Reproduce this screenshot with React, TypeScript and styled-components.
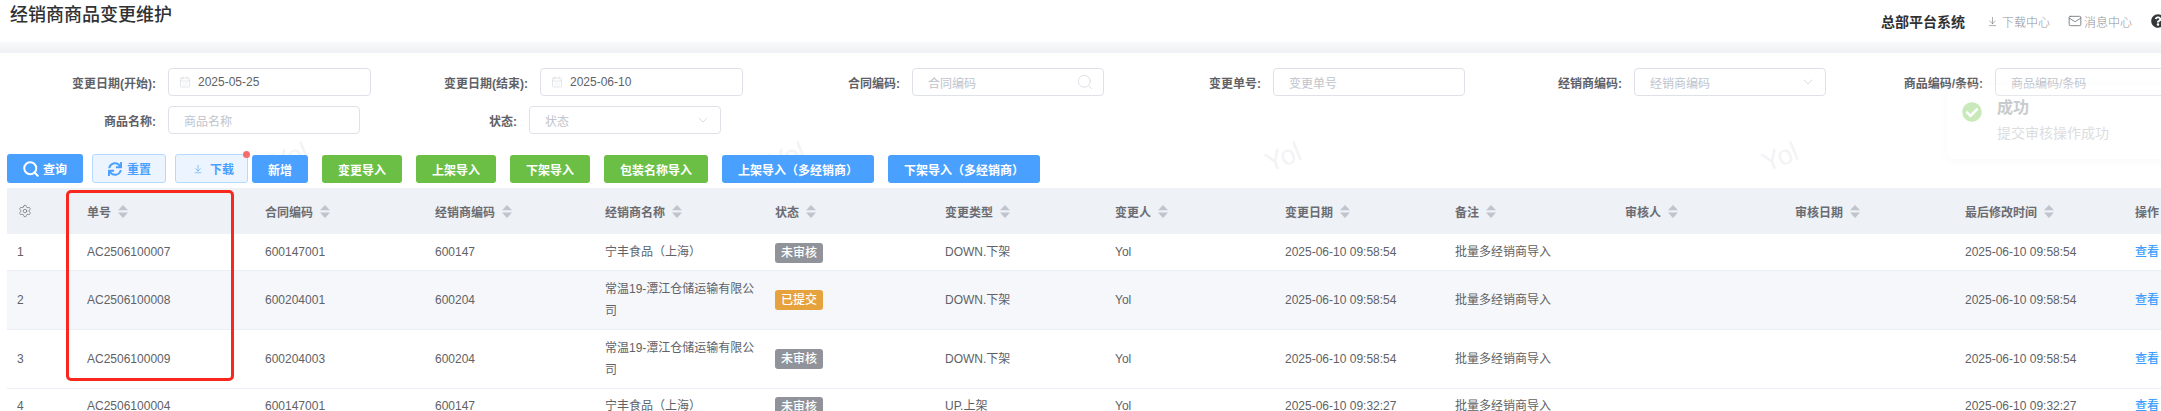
import React from "react";
import styled, { createGlobalStyle } from "styled-components";
import { Search, ArrowDownToLine, Mail, CalendarDays, ChevronDown, Settings } from "lucide-react";
import { FaSync, FaQuestionCircle, FaCheckCircle } from "react-icons/fa";

const Global = createGlobalStyle`
  html, body { margin: 0; padding: 0; background: #fff; }
  body { width: 2161px; height: 411px; overflow: hidden; font-family: "Liberation Sans", "Noto Sans CJK SC", sans-serif; font-size: 12px; color: #606266; }
  * { box-sizing: border-box; }
`;

const Page = styled.div`
  position: relative;
  width: 2161px;
  height: 411px;
  overflow: hidden;
`;

const TopBar = styled.header`
  display: flex;
  align-items: flex-start;
  justify-content: space-between;
  height: 42px;
  padding-left: 10px;
`;

const Title = styled.h1`
  margin: 4px 0 0;
  font-size: 18px;
  line-height: 22px;
  font-weight: 500;
  color: #303133;
`;

const TopRight = styled.div`
  display: flex;
  align-items: center;
  height: 42px;
  margin-right: -4px;
`;

const SystemName = styled.span`
  font-size: 14px;
  font-weight: 600;
  color: #303133;
  margin-right: 22px;
`;

const TopLink = styled.span<{ $gap: number }>`
  display: flex;
  align-items: center;
  gap: ${(p) => p.$gap}px;
  margin-right: 18px;
  font-size: 12px;
  font-weight: 300;
  color: #8f9298;
  svg { color: #6a6d73; flex-shrink: 0; }
`;

const HelpIcon = styled(FaQuestionCircle)`
  color: #33363b;
  width: 14px;
  height: 14px;
  margin-left: 1px;
`;

const Band = styled.div`
  height: 11px;
  background: linear-gradient(180deg, #f8f9fa 0%, #eff1f4 100%);
`;

const Form = styled.section`
  display: flex;
  flex-direction: column;
  gap: 10px;
  padding: 15px 0 0 7px;
`;

const FormRow = styled.div`
  display: flex;
  gap: 8px;
  white-space: nowrap;
`;

const Field = styled.div`
  display: flex;
  align-items: center;
  gap: 12px;
  flex-shrink: 0;
`;

const Label = styled.label`
  width: 149px;
  text-align: right;
  font-size: 12px;
  font-weight: 600;
  color: #5f6166;
`;

const InputBox = styled.div<{ $date?: boolean }>`
  display: flex;
  align-items: center;
  justify-content: space-between;
  width: ${(p) => (p.$date ? 203 : 192)}px;
  height: 28px;
  padding: 0 9px 0 ${(p) => (p.$date ? 10 : 15)}px;
  border: 1px solid #dfe1e8;
  border-radius: 4px;
  background: #fff;
  font-size: 12px;
`;

const Placeholder = styled.span`
  color: #c0c4cc;
`;

const DateValue = styled.span`
  display: flex;
  align-items: center;
  gap: 7px;
  color: #606266;
  svg { color: #c8ccd4; }
`;

const Marks = styled.div`
  position: absolute;
  top: 142px;
  left: 272px;
  display: flex;
  gap: 460px;
  pointer-events: none;
`;

const Mark = styled.span`
  font-size: 27px;
  line-height: 31px;
  color: #f3f3f5;
  transform: rotate(-22deg);
`;

const Toolbar = styled.div`
  position: relative;
  z-index: 1;
  display: flex;
  align-items: flex-end;
  gap: 14px;
  margin-top: 20px;
  padding-left: 7px;
  height: 29px;
`;

const LeadGroup = styled.div`
  display: flex;
  gap: 9px;
  margin-right: -10px;
`;

const Btn = styled.button<{ $tone: "blue" | "green" }>`
  height: 28px;
  padding: 0 16px;
  border: none;
  border-radius: 3px;
  font-family: inherit;
  font-size: 12px;
  font-weight: 600;
  color: #fff;
  white-space: nowrap;
  background: ${(p) => (p.$tone === "blue" ? "#49a0ff" : "#6bbf45")};
`;

const QueryBtn = styled.button`
  display: flex;
  align-items: center;
  gap: 3px;
  width: 76px;
  height: 29px;
  padding: 0 0 0 15px;
  border: none;
  border-radius: 3px;
  background: #49a0ff;
  color: #fff;
  font-family: inherit;
  font-size: 12px;
  font-weight: 600;
`;

const PlainBtn = styled.button<{ $w: number; $pad: number; $gap: number }>`
  position: relative;
  display: flex;
  align-items: center;
  gap: ${(p) => p.$gap}px;
  width: ${(p) => p.$w}px;
  height: 29px;
  padding: 0 0 0 ${(p) => p.$pad}px;
  border: 1px solid #b5d9ff;
  border-radius: 3px;
  background: #ecf5ff;
  color: #49a0ff;
  font-family: inherit;
  font-size: 12px;
  font-weight: 600;
`;

const Dot = styled.span`
  position: absolute;
  top: -4px;
  right: -3px;
  width: 7px;
  height: 7px;
  border-radius: 50%;
  background: #f56c6c;
`;

const TableWrap = styled.div`
  position: relative;
  z-index: 1;
  margin: 5px 0 0 7px;
  width: 2268px;
`;

const Table = styled.table`
  table-layout: fixed;
  width: 2268px;
  border-collapse: collapse;
  font-size: 12px;
`;

const Th = styled.th`
  height: 46px;
  padding: 0 10px;
  background: #eef1f6;
  text-align: left;
  font-weight: 600;
  color: #6a6c72;
`;

const ThInner = styled.span`
  display: inline-flex;
  align-items: center;
  gap: 7px;
`;

const Tr = styled.tr<{ $stripe?: boolean; $h: number }>`
  height: ${(p) => p.$h}px;
  background: ${(p) => (p.$stripe ? "#f5f7fb" : "#fff")};
  border-bottom: 1px solid #ebeef5;
`;

const Td = styled.td`
  padding: 0 10px;
  line-height: 22px;
  color: #606266;
  word-break: break-all;
`;

const Tag = styled.span<{ $tone: "gray" | "orange" }>`
  display: inline-block;
  height: 20px;
  padding: 0 6px;
  line-height: 20px;
  border-radius: 3px;
  color: #fff;
  font-weight: 500;
  vertical-align: middle;
  background: ${(p) => (p.$tone === "gray" ? "#909399" : "#e6a23c")};
`;

const LinkText = styled.a`
  color: #409eff;
  font-weight: 500;
`;

const RedBox = styled.div`
  position: absolute;
  left: 59px;
  top: 2px;
  width: 168px;
  height: 191px;
  border: 3px solid #f8281e;
  border-radius: 5px;
  pointer-events: none;
`;

const Toast = styled.div`
  position: absolute;
  z-index: 3;
  top: 85px;
  left: 1947px;
  display: flex;
  gap: 15px;
  width: 330px;
  height: 74px;
  padding: 14px 26px 14px 15px;
  border-radius: 8px;
  background: rgba(255, 255, 255, 0.2);
  box-shadow: 0 2px 12px rgba(0, 0, 0, 0.03);
`;

const ToastIcon = styled(FaCheckCircle)`
  width: 20px;
  height: 20px;
  margin-top: 3px;
  color: #c9e9ba;
  flex-shrink: 0;
`;

const ToastBody = styled.div`
  display: flex;
  flex-direction: column;
  gap: 4px;
`;

const ToastTitle = styled.div`
  font-size: 16px;
  line-height: 18px;
  font-weight: 600;
  color: #c9cacc;
`;

const ToastText = styled.div`
  font-size: 14px;
  line-height: 24px;
  color: #dcdddf;
`;

const Sort = () => (
  <svg width="10" height="13" viewBox="0 0 10 13" fill="#c0c4cc">
    <path d="M5 0 10 5.2H0Z" />
    <path d="M0 7.6H10L5 13Z" />
  </svg>
);

const columns = ["合同编码", "经销商编码", "经销商名称", "状态", "变更类型", "变更人", "变更日期", "备注", "审核人", "审核日期", "最后修改时间"];
const widths = [70, 178, ...columns.map(() => 170), 150];

const rows = [
  { h: 36, no: "AC2506100007", contract: "600147001", dealer: "600147", name: "宁丰食品（上海）", tag: "未审核", type: "DOWN.下架", date: "2025-06-10 09:58:54" },
  { h: 59, no: "AC2506100008", contract: "600204001", dealer: "600204", name: "常温19-潭江仓储运输有限公司", tag: "已提交", type: "DOWN.下架", date: "2025-06-10 09:58:54" },
  { h: 59, no: "AC2506100009", contract: "600204003", dealer: "600204", name: "常温19-潭江仓储运输有限公司", tag: "未审核", type: "DOWN.下架", date: "2025-06-10 09:58:54" },
  { h: 36, no: "AC2506100004", contract: "600147001", dealer: "600147", name: "宁丰食品（上海）", tag: "未审核", type: "UP.上架", date: "2025-06-10 09:32:27" },
];

const DateField = ({ label, value }: { label: string; value: string }) => (
  <Field>
    <Label>{label}</Label>
    <InputBox $date>
      <DateValue>
        <CalendarDays size={12} strokeWidth={1} />
        {value}
      </DateValue>
    </InputBox>
  </Field>
);

const TextField = ({ label, hint, icon }: { label: string; hint: string; icon?: React.ReactNode }) => (
  <Field>
    <Label>{label}</Label>
    <InputBox>
      <Placeholder>{hint}</Placeholder>
      {icon}
    </InputBox>
  </Field>
);

const Chevron = () => <ChevronDown size={16} strokeWidth={0.9} color="#c0c4cc" />;

export default function App() {
  return (
    <Page>
      <Global />
      <TopBar>
        <Title>经销商商品变更维护</Title>
        <TopRight>
          <SystemName>总部平台系统</SystemName>
          <TopLink $gap={4}>
            <ArrowDownToLine size={11} strokeWidth={1.2} />
            下载中心
          </TopLink>
          <TopLink $gap={2}>
            <Mail size={14} strokeWidth={1.4} />
            消息中心
          </TopLink>
          <HelpIcon />
        </TopRight>
      </TopBar>
      <Band />
      <Form>
        <FormRow>
          <DateField label="变更日期(开始):" value="2025-05-25" />
          <DateField label="变更日期(结束):" value="2025-06-10" />
          <TextField label="合同编码:" hint="合同编码" icon={<Search size={18} strokeWidth={1} color="#d3d6de" />} />
          <TextField label="变更单号:" hint="变更单号" />
          <TextField label="经销商编码:" hint="经销商编码" icon={<Chevron />} />
          <TextField label="商品编码/条码:" hint="商品编码/条码" />
        </FormRow>
        <FormRow>
          <TextField label="商品名称:" hint="商品名称" />
          <TextField label="状态:" hint="状态" icon={<Chevron />} />
        </FormRow>
      </Form>
      <Marks>
        {[0, 1, 2, 3].map((i) => (
          <Mark key={i}>Yol</Mark>
        ))}
      </Marks>
      <Toolbar>
        <LeadGroup>
          <QueryBtn>
            <Search size={18} strokeWidth={2.6} />
            查询
          </QueryBtn>
          <PlainBtn $w={74} $pad={15} $gap={5}>
            <FaSync size={14} />
            重置
          </PlainBtn>
          <PlainBtn $w={73} $pad={17} $gap={7}>
            <ArrowDownToLine size={10} strokeWidth={1.4} />
            下载
            <Dot />
          </PlainBtn>
        </LeadGroup>
        <Btn $tone="blue">新增</Btn>
        <Btn $tone="green">变更导入</Btn>
        <Btn $tone="green">上架导入</Btn>
        <Btn $tone="green">下架导入</Btn>
        <Btn $tone="green">包装名称导入</Btn>
        <Btn $tone="blue">上架导入（多经销商）</Btn>
        <Btn $tone="blue">下架导入（多经销商）</Btn>
      </Toolbar>
      <TableWrap>
        <Table>
          <colgroup>
            {widths.map((w, i) => (
              <col key={i} style={{ width: w }} />
            ))}
          </colgroup>
          <thead>
            <tr>
              <Th>
                <Settings size={14} strokeWidth={1.1} color="#606266" style={{ display: "block", marginLeft: 1 }} />
              </Th>
              <Th>
                <ThInner>
                  单号
                  <Sort />
                </ThInner>
              </Th>
              {columns.map((c) => (
                <Th key={c}>
                  <ThInner>
                    {c}
                    <Sort />
                  </ThInner>
                </Th>
              ))}
              <Th>操作</Th>
            </tr>
          </thead>
          <tbody>
            {rows.map((r, i) => (
              <Tr key={r.no} $h={r.h} $stripe={i === 1}>
                <Td>{i + 1}</Td>
                <Td>{r.no}</Td>
                <Td>{r.contract}</Td>
                <Td>{r.dealer}</Td>
                <Td>{r.name}</Td>
                <Td>
                  <Tag $tone={r.tag === "已提交" ? "orange" : "gray"}>{r.tag}</Tag>
                </Td>
                <Td>{r.type}</Td>
                <Td>Yol</Td>
                <Td>{r.date}</Td>
                <Td>批量多经销商导入</Td>
                <Td />
                <Td />
                <Td>{r.date}</Td>
                <Td>
                  <LinkText>查看</LinkText>
                </Td>
              </Tr>
            ))}
          </tbody>
        </Table>
        <RedBox />
      </TableWrap>
      <Toast>
        <ToastIcon />
        <ToastBody>
          <ToastTitle>成功</ToastTitle>
          <ToastText>提交审核操作成功</ToastText>
        </ToastBody>
      </Toast>
    </Page>
  );
}
